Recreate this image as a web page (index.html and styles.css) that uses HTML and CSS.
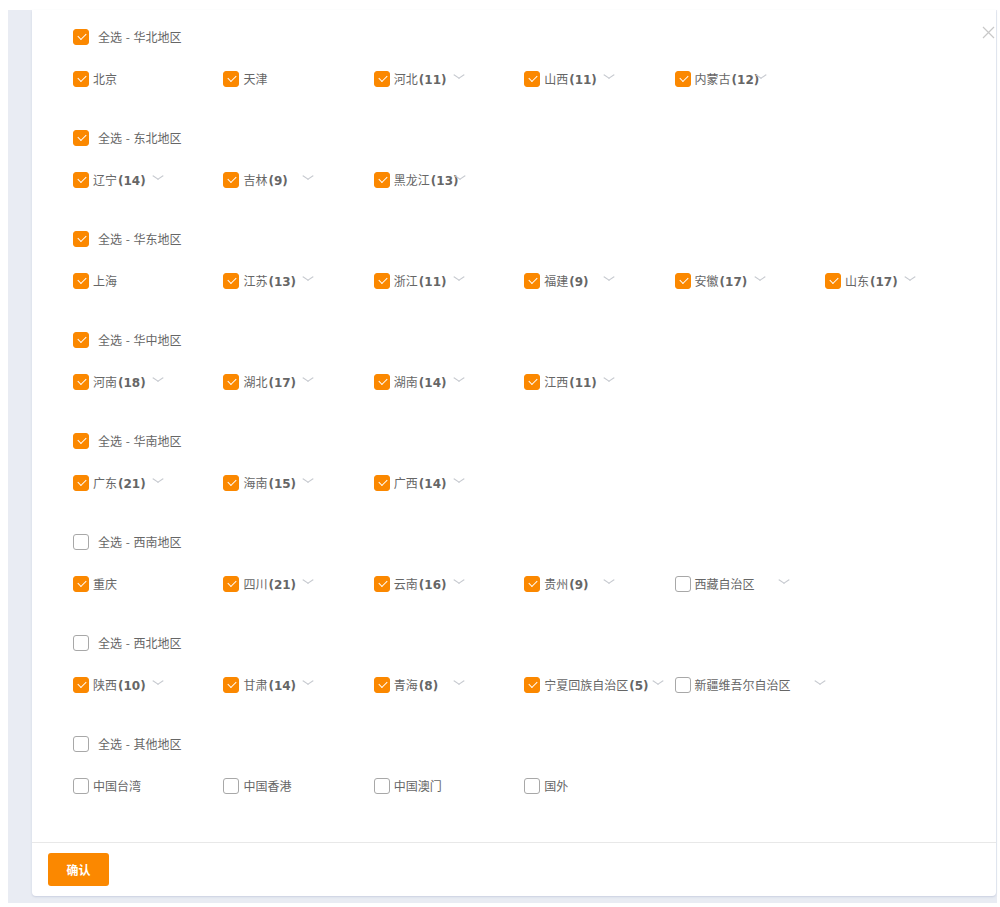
FILE: index.html
```html
<!DOCTYPE html>
<html lang="zh-CN">
<head>
<meta charset="utf-8">
<link rel="stylesheet" href="styles.css">
</head>
<body>
<div class="frame">
  <div class="card">
    <span class="close"><svg width="13" height="13" viewBox="0 0 13 13"><path d="M1 1L12 12M12 1L1 12" stroke="#c8c8c8" stroke-width="1.2" fill="none"/></svg></span>
    <div class="body">

      <div class="group">
        <label class="head"><span class="cb on"></span><span>全选 - 华北地区</span></label>
        <div class="items">
          <div class="item"><span class="cb on"></span><span class="txt">北京</span></div>
          <div class="item"><span class="cb on"></span><span class="txt">天津</span></div>
          <div class="item"><span class="cb on"></span><span class="txt">河北<b class="count">(11)</b></span><i class="chev"></i></div>
          <div class="item"><span class="cb on"></span><span class="txt">山西<b class="count">(11)</b></span><i class="chev"></i></div>
          <div class="item"><span class="cb on"></span><span class="txt">内蒙古<b class="count">(12)</b></span><i class="chev"></i></div>
        </div>
      </div>

      <div class="group">
        <label class="head"><span class="cb on"></span><span>全选 - 东北地区</span></label>
        <div class="items">
          <div class="item"><span class="cb on"></span><span class="txt">辽宁<b class="count">(14)</b></span><i class="chev"></i></div>
          <div class="item"><span class="cb on"></span><span class="txt">吉林<b class="count">(9)</b></span><i class="chev"></i></div>
          <div class="item"><span class="cb on"></span><span class="txt">黑龙江<b class="count">(13)</b></span><i class="chev"></i></div>
        </div>
      </div>

      <div class="group">
        <label class="head"><span class="cb on"></span><span>全选 - 华东地区</span></label>
        <div class="items">
          <div class="item"><span class="cb on"></span><span class="txt">上海</span></div>
          <div class="item"><span class="cb on"></span><span class="txt">江苏<b class="count">(13)</b></span><i class="chev"></i></div>
          <div class="item"><span class="cb on"></span><span class="txt">浙江<b class="count">(11)</b></span><i class="chev"></i></div>
          <div class="item"><span class="cb on"></span><span class="txt">福建<b class="count">(9)</b></span><i class="chev"></i></div>
          <div class="item"><span class="cb on"></span><span class="txt">安徽<b class="count">(17)</b></span><i class="chev"></i></div>
          <div class="item"><span class="cb on"></span><span class="txt">山东<b class="count">(17)</b></span><i class="chev"></i></div>
        </div>
      </div>

      <div class="group">
        <label class="head"><span class="cb on"></span><span>全选 - 华中地区</span></label>
        <div class="items">
          <div class="item"><span class="cb on"></span><span class="txt">河南<b class="count">(18)</b></span><i class="chev"></i></div>
          <div class="item"><span class="cb on"></span><span class="txt">湖北<b class="count">(17)</b></span><i class="chev"></i></div>
          <div class="item"><span class="cb on"></span><span class="txt">湖南<b class="count">(14)</b></span><i class="chev"></i></div>
          <div class="item"><span class="cb on"></span><span class="txt">江西<b class="count">(11)</b></span><i class="chev"></i></div>
        </div>
      </div>

      <div class="group">
        <label class="head"><span class="cb on"></span><span>全选 - 华南地区</span></label>
        <div class="items">
          <div class="item"><span class="cb on"></span><span class="txt">广东<b class="count">(21)</b></span><i class="chev"></i></div>
          <div class="item"><span class="cb on"></span><span class="txt">海南<b class="count">(15)</b></span><i class="chev"></i></div>
          <div class="item"><span class="cb on"></span><span class="txt">广西<b class="count">(14)</b></span><i class="chev"></i></div>
        </div>
      </div>

      <div class="group">
        <label class="head"><span class="cb"></span><span>全选 - 西南地区</span></label>
        <div class="items">
          <div class="item"><span class="cb on"></span><span class="txt">重庆</span></div>
          <div class="item"><span class="cb on"></span><span class="txt">四川<b class="count">(21)</b></span><i class="chev"></i></div>
          <div class="item"><span class="cb on"></span><span class="txt">云南<b class="count">(16)</b></span><i class="chev"></i></div>
          <div class="item"><span class="cb on"></span><span class="txt">贵州<b class="count">(9)</b></span><i class="chev"></i></div>
          <div class="item"><span class="cb"></span><span class="txt">西藏自治区</span><i class="chev"></i></div>
        </div>
      </div>

      <div class="group">
        <label class="head"><span class="cb"></span><span>全选 - 西北地区</span></label>
        <div class="items">
          <div class="item"><span class="cb on"></span><span class="txt">陕西<b class="count">(10)</b></span><i class="chev"></i></div>
          <div class="item"><span class="cb on"></span><span class="txt">甘肃<b class="count">(14)</b></span><i class="chev"></i></div>
          <div class="item"><span class="cb on"></span><span class="txt">青海<b class="count">(8)</b></span><i class="chev"></i></div>
          <div class="item"><span class="cb on"></span><span class="txt">宁夏回族自治区<b class="count">(5)</b></span><i class="chev"></i></div>
          <div class="item"><span class="cb"></span><span class="txt">新疆维吾尔自治区</span><i class="chev"></i></div>
        </div>
      </div>

      <div class="group last">
        <label class="head"><span class="cb"></span><span>全选 - 其他地区</span></label>
        <div class="items">
          <div class="item"><span class="cb"></span><span class="txt">中国台湾</span></div>
          <div class="item"><span class="cb"></span><span class="txt">中国香港</span></div>
          <div class="item"><span class="cb"></span><span class="txt">中国澳门</span></div>
          <div class="item"><span class="cb"></span><span class="txt">国外</span></div>
        </div>
      </div>

    </div>
    <div class="footer">
      <button class="btn">确认</button>
    </div>
  </div>
</div>
</body>
</html>
```
FILE: styles.css
```css
* { box-sizing: border-box; }
html, body { margin: 0; padding: 0; background: #fff; }
body {
  font-family: "Noto Sans CJK SC", "Noto Sans", sans-serif;
  font-size: 12px;
  color: #666;
}
.frame {
  margin: 10px 0 0 8px;
  width: 989px;
  height: 893px;
  background: #e9ecf3;
  padding-left: 24px;
}
.card {
  position: relative;
  width: 964px;
  height: 886px;
  background: #fff;
  border-radius: 0 0 4px 4px;
  box-shadow: 0 1px 2px rgba(180, 188, 210, 0.6);
  display: flex;
  flex-direction: column;
}
.close {
  position: absolute;
  right: 1px;
  top: 16px;
  width: 13px;
  height: 13px;
  line-height: 0;
}
.body {
  flex: 1;
  padding: 19px 0 0 41px;
}
.group { padding-bottom: 43px; }
.group.last { padding-bottom: 0; }
.head {
  display: flex;
  align-items: center;
  height: 16px;
  margin-bottom: 26px;
  line-height: 16px;
}
.head .cb { margin-right: 9px; }
.head span:last-child { word-spacing: 1px; }
.items {
  display: grid;
  grid-template-columns: repeat(6, 150.4px);
  height: 16px;
}
.item {
  display: flex;
  align-items: center;
  height: 16px;
  line-height: 16px;
  white-space: nowrap;
}
.cb {
  flex: none;
  width: 16px;
  height: 16px;
  border: 1px solid #a8a8a8;
  border-radius: 3px;
  background: #fff;
  position: relative;
}
.cb.on {
  background: #fb8800;
  border-color: #fb8800;
}
.cb.on::after {
  content: "";
  position: absolute;
  left: 4px;
  top: 3px;
  width: 7px;
  height: 4px;
  border-left: 1.6px solid #fff;
  border-bottom: 1.6px solid #fff;
  transform: rotate(-45deg);
}
.txt {
  display: inline-block;
  min-width: 36px;
  margin-left: 4px;
}
.count {
  display: inline-block;
  width: 0;
  margin-left: 1px;
  font-family: "DejaVu Sans", "Noto Sans", sans-serif;
  font-size: 12px;
  font-weight: 700;
  color: #666;
}
.chev {
  flex: none;
  display: inline-block;
  width: 10px;
  height: 6px;
  margin-left: 24px;
  margin-top: -4px;
  position: relative;
}
.chev::before {
  content: "";
  position: absolute;
  left: 2px;
  top: -2px;
  width: 5px;
  height: 5px;
  border-right: 1px solid #c6c9cf;
  border-bottom: 1px solid #c6c9cf;
  transform: scaleX(1.35) scaleY(0.9) rotate(45deg);
}
.footer {
  border-top: 1px solid #e8e8e8;
  padding: 10px 16px;
  height: 54px;
}
.btn {
  width: 61px;
  height: 33px;
  border: 0;
  border-radius: 3px;
  background: #fb8800;
  color: #fff;
  font-family: "Noto Sans CJK SC", sans-serif;
  font-size: 12px;
  font-weight: 700;
  padding: 0;
}
```
